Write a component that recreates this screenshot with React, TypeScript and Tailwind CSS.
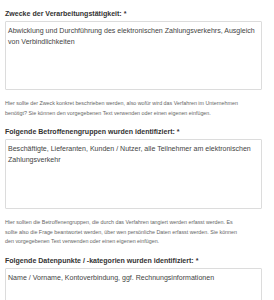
import React from 'react';

interface FieldProps {
  label: string;
  value: string;
  height: string;
  hint?: string[];
}

const Field: React.FC<FieldProps> = ({ label, value, height, hint }) => (
  <div>
    <label className="block text-[7.05px] font-bold leading-[9px] text-[#333]">{label}</label>
    <textarea
      readOnly
      defaultValue={value}
      className={`mt-[3px] block w-[257px] ${height} resize-none rounded-[1px] border border-[#dcdcdc] bg-white px-[2px] py-[3px] text-[7.05px] leading-[11px] text-[#444] outline-none`}
      style={{ fontFamily: '"Liberation Sans", Arial, sans-serif' }}
    />
    {hint && (
      <p className="mt-[9px] text-[5.35px] leading-[9.5px] text-[#666]">
        {hint.map((line, i) => (
          <React.Fragment key={i}>
            {line}
            {i < hint.length - 1 && <br />}
          </React.Fragment>
        ))}
      </p>
    )}
  </div>
);

export default function App() {
  return (
    <div
      className="h-[300px] w-[274px] overflow-hidden bg-white px-[5px] pt-[9px]"
      style={{ fontFamily: '"Liberation Sans", Arial, sans-serif' }}
    >
      <div className="flex flex-col gap-[9px]">
        <Field
          label="Zwecke der Verarbeitungstätigkeit: *"
          value="Abwicklung und Durchführung des elektronischen Zahlungsverkehrs, Ausgleich von Verbindlichkeiten"
          height="h-[69px]"
          hint={[
            'Hier sollte der Zweck konkret beschrieben werden, also wofür wird das Verfahren im Unternehmen',
            'benötigt? Sie können den vorgegebenen Text verwenden oder einen eigenen einfügen.',
          ]}
        />
        <Field
          label="Folgende Betroffenengruppen wurden identifiziert: *"
          value="Beschäftigte, Lieferanten, Kunden / Nutzer, alle Teilnehmer am elektronischen Zahlungsverkehr"
          height="h-[70px]"
          hint={[
            'Hier sollten die Betroffenengruppen, die durch das Verfahren tangiert werden erfasst werden. Es',
            'sollte also die Frage beantwortet werden, über wen persönliche Daten erfasst werden. Sie können',
            'den vorgegebenen Text verwenden oder einen eigenen einfügen.',
          ]}
        />
        <Field
          label="Folgende Datenpunkte / -kategorien wurden identifiziert: *"
          value="Name / Vorname, Kontoverbindung, ggf. Rechnungsinformationen"
          height="h-[70px]"
        />
      </div>
    </div>
  );
}
